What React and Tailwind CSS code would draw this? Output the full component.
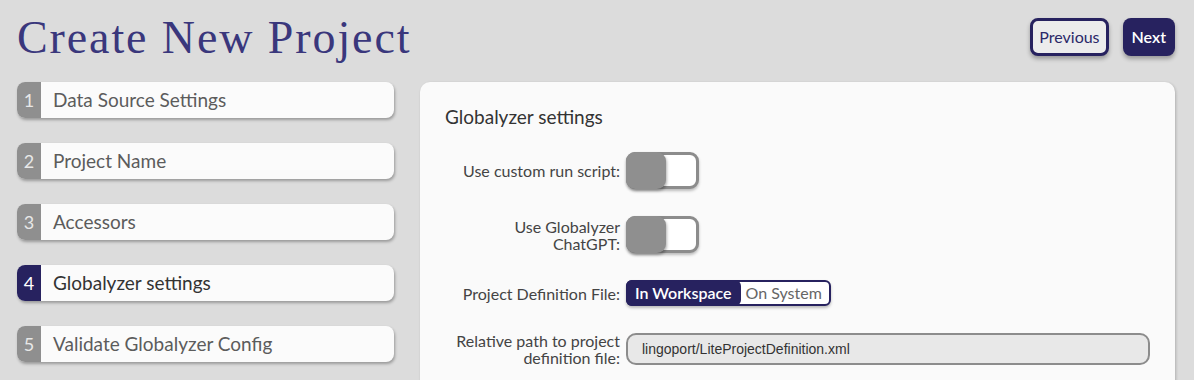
import React from "react";

const STEPS = [
  { n: 1, label: "Data Source Settings" },
  { n: 2, label: "Project Name" },
  { n: 3, label: "Accessors" },
  { n: 4, label: "Globalyzer settings", active: true },
  { n: 5, label: "Validate Globalyzer Config" },
];

const lato = { fontFamily: "Lato, 'Noto Sans', sans-serif" };

function Toggle() {
  return (
    <div className="w-[73px] h-[37px] rounded-[9px] border-[3px] border-[#8c8c8c] bg-white flex shadow-[0_2px_3px_rgba(0,0,0,0.25)]">
      <div className="w-[40px] h-[37px] -mt-[3px] -ml-[3px] rounded-[9px] bg-[#8f8f8f] shadow-[1px_2px_3px_rgba(0,0,0,0.3)]" />
    </div>
  );
}

function Row({ label, children, className = "" }) {
  return (
    <div className={`flex items-center gap-[6px] ${className}`}>
      <div className="w-[175px] text-right text-[16px] leading-[17px] text-[#444]">
        {label}
      </div>
      {children}
    </div>
  );
}

export default function App() {
  return (
    <div className="w-[1194px] h-[380px] bg-[#dcdcdc] overflow-hidden" style={lato}>
      {/* Header */}
      <div className="flex items-start justify-between pl-[17px] pr-[19px] pt-[14px] h-[82px]">
        <h1
          className="text-[46px] leading-[48px] text-[#3a377c] tracking-[1.9px]"
          style={{ fontFamily: "'Liberation Serif', 'DejaVu Serif', serif" }}
        >
          Create New Project
        </h1>
        <div className="flex gap-[14px] pt-[4px]">
          <button className="h-[38px] px-[6px] rounded-[8px] border-[3px] border-[#27225f] bg-[#ececec] text-[#2b2868] text-[16px] shadow-[0_3px_4px_rgba(0,0,0,0.3)]">
            Previous
          </button>
          <button className="h-[38px] px-[9px] rounded-[8px] bg-[#27225f] text-white text-[16px] font-semibold shadow-[0_3px_4px_rgba(0,0,0,0.3)]">
            Next
          </button>
        </div>
      </div>

      <div className="flex pl-[17px] gap-[26px]">
        {/* Steps */}
        <div className="w-[377px] flex flex-col gap-[25px]">
          {STEPS.map((s) => (
            <div
              key={s.n}
              className="h-[36px] flex rounded-[8px] bg-[#fbfbfb] overflow-hidden shadow-[1px_2px_3px_rgba(0,0,0,0.3)]"
            >
              <div
                className={`w-[24px] flex items-center justify-center text-[18px] ${
                  s.active ? "bg-[#27225f] text-white" : "bg-[#8f8f8f] text-[#e8e8e8]"
                }`}
              >
                {s.n}
              </div>
              <div
                className={`flex items-center pl-[12px] text-[19px] ${
                  s.active ? "text-[#333]" : "text-[#5c5c5c]"
                }`}
              >
                {s.label}
              </div>
            </div>
          ))}
        </div>

        {/* Card */}
        <div className="w-[755px] h-[320px] rounded-[10px] bg-[#fafafa] shadow-[1px_1px_3px_rgba(0,0,0,0.2)] pt-[24px] pl-[25px]">
          <h2 className="text-[19px] leading-[22px] text-[#333]">Globalyzer settings</h2>

          <Row label="Use custom run script:" className="mt-[24px]">
            <Toggle />
          </Row>

          <Row label={<>Use Globalyzer<br />ChatGPT:</>} className="mt-[27px]">
            <Toggle />
          </Row>

          <Row label="Project Definition File:" className="mt-[27px]">
            <div className="h-[26px] flex rounded-[6px] border-[2px] border-[#27225f] bg-white text-[16px] shadow-[0_2px_3px_rgba(0,0,0,0.25)]">
              <div className="-m-[2px] px-[9px] flex items-center rounded-[6px] bg-[#27225f] text-white font-semibold">
                In Workspace
              </div>
              <div className="px-[7px] flex items-center text-[#666]">On System</div>
            </div>
          </Row>

          <Row label={<>Relative path to project<br />definition file:</>} className="mt-[26px]">
            <div
              className="w-[524px] h-[32px] rounded-[10px] border-[2px] border-[#8c8c8c] bg-[#e8e8e8] flex items-center pl-[14px] text-[14px] text-[#333]"
              style={{ fontFamily: "'Liberation Sans', Arial, sans-serif" }}
            >
              lingoport/LiteProjectDefinition.xml
            </div>
          </Row>
        </div>
      </div>
    </div>
  );
}
